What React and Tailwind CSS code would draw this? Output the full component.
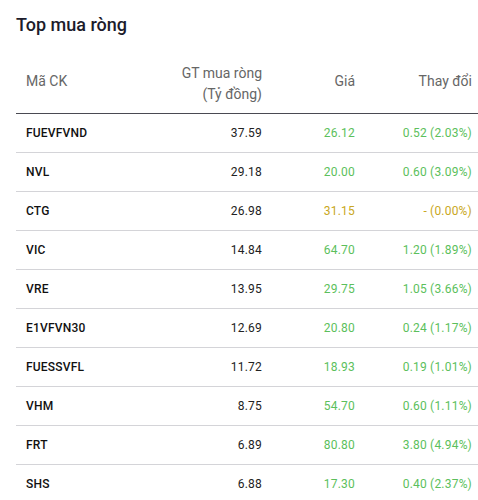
import React from "react";

const rows = [
  ["FUEVFVND", "37.59", "26.12", "0.52 (2.03%)", "g"],
  ["NVL", "29.18", "20.00", "0.60 (3.09%)", "g"],
  ["CTG", "26.98", "31.15", "- (0.00%)", "y"],
  ["VIC", "14.84", "64.70", "1.20 (1.89%)", "g"],
  ["VRE", "13.95", "29.75", "1.05 (3.66%)", "g"],
  ["E1VFVN30", "12.69", "20.80", "0.24 (1.17%)", "g"],
  ["FUESSVFL", "11.72", "18.93", "0.19 (1.01%)", "g"],
  ["VHM", "8.75", "54.70", "0.60 (1.11%)", "g"],
  ["FRT", "6.89", "80.80", "3.80 (4.94%)", "g"],
  ["SHS", "6.88", "17.30", "0.40 (2.37%)", "g"],
];

export default function App() {
  return (
    <div
      className="w-[478px] h-[500px] overflow-hidden bg-white pl-4"
      style={{ fontFamily: "Roboto, 'Liberation Sans', sans-serif" }}
    >
      <div className="pt-[11px] h-[39px] text-[18px] leading-[28px] font-medium text-[#1c1c2b]">
        Top mua ròng
      </div>
      <div className="grid grid-cols-[140px_116px_93px_1fr] h-[75px] border-b border-[#4a4a52] pt-[24px] pb-[9px] text-[14px] leading-[21px] text-[#666666] items-center">
        <div className="pl-[10px] pb-[5px]">Mã CK</div>
        <div className="pr-[10px] text-right">
          GT mua ròng
          <br />
          (Tỷ đồng)
        </div>
        <div className="pr-[10px] text-right pb-[5px]">Giá</div>
        <div className="pr-[6px] text-right pb-[5px]">Thay đổi</div>
      </div>
      {rows.map(([sym, gt, price, chg, c]) => {
        const color = c === "g" ? "text-[#5cbf5c]" : "text-[#c9a722]";
        return (
          <div
            key={sym}
            className="grid grid-cols-[140px_116px_93px_1fr] h-[39px] border-b border-[#d4d4d8] items-center text-[12px] tracking-[0.2px]"
          >
            <div className="pl-[10px] font-medium text-[#111111]">{sym}</div>
            <div className="pr-[10px] text-right text-[#222222]">{gt}</div>
            <div className={`pr-[10px] text-right ${color}`}>{price}</div>
            <div className={`pr-[6px] text-right ${color}`}>{chg}</div>
          </div>
        );
      })}
    </div>
  );
}
